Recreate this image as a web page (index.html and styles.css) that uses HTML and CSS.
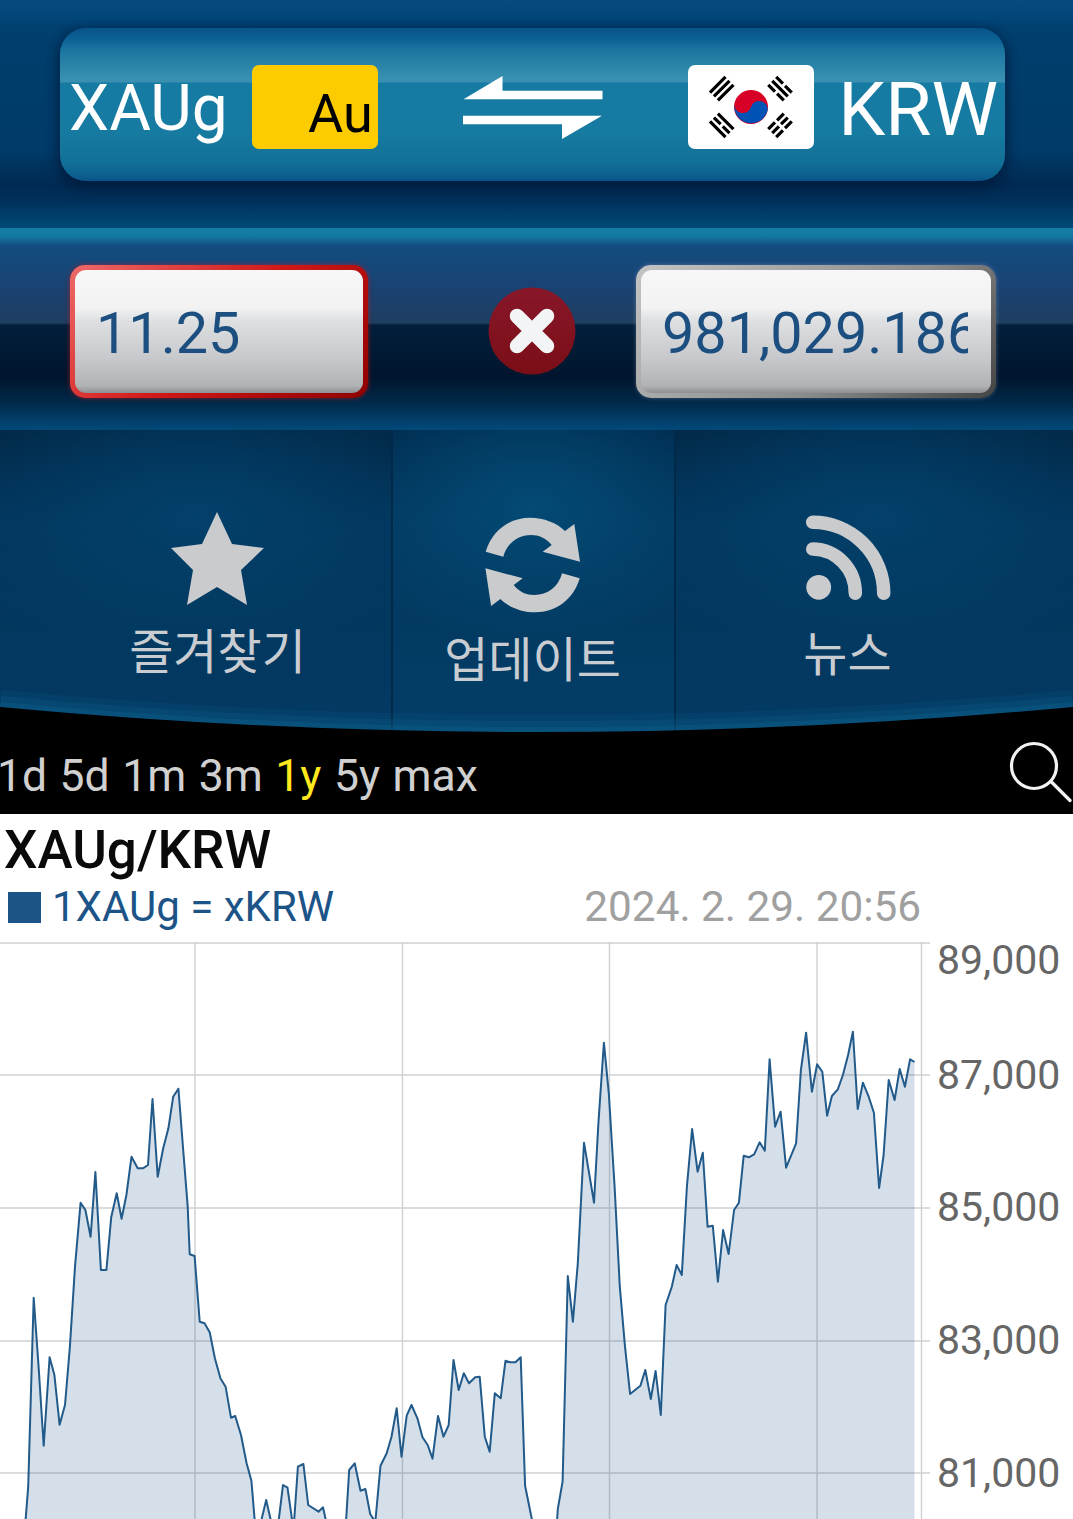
FILE: index.html
```html
<!DOCTYPE html>
<html lang="ko">
<head>
<meta charset="utf-8">
<title>XAUg/KRW</title>
<link rel="stylesheet" href="styles.css">
</head>
<body>
<div class="app">
  <header class="pair-band">
    <div class="pair-pill">
      <div class="cur">
        <span class="cur-code cur-code-from">XAUg</span>
        <span class="badge badge-au">Au</span>
      </div>
      <svg class="swap" viewBox="0 0 140 64" width="140" height="64">
        <path fill="#fff" d="M0.5 23.3 L39.5 0 L39.5 14.7 L139.5 14.7 L139.5 23.3 Z M0 39.7 L139 39.7 L99 63 L99 48.3 L0 48.3 Z"/>
      </svg>
      <div class="cur">
        <span class="badge badge-flag">
          <svg viewBox="0 0 126 84" width="126" height="84">
            <circle cx="63" cy="42" r="17" fill="#d80027"/>
            <path fill="#0052b4" d="M46.5 38 A8.5 8.5 0 0 0 63 42 A8.5 8.5 0 0 1 79.5 46 A17 17 0 0 1 46.5 38 Z"/>
            <g stroke="#000" stroke-width="3.2" fill="none">
              <g transform="translate(33.7 23.7) rotate(-45)">
                <path d="M-11 -5.6H11M-11 0H11M-11 5.6H11"/>
              </g>
              <g transform="translate(92 23.7) rotate(45)">
                <path d="M-11 -5.6H-1.5M1.5 -5.6H11M-11 0H11M-11 5.6H-1.5M1.5 5.6H11"/>
              </g>
              <g transform="translate(33.7 60.3) rotate(45)">
                <path d="M-11 -5.6H11M-11 0H-1.5M1.5 0H11M-11 5.6H11"/>
              </g>
              <g transform="translate(92 60.3) rotate(-45)">
                <path d="M-11 -5.6H-1.5M1.5 -5.6H11M-11 0H-1.5M1.5 0H11M-11 5.6H-1.5M1.5 5.6H11"/>
              </g>
            </g>
          </svg>
        </span>
        <span class="cur-code cur-code-to">KRW</span>
      </div>
    </div>
  </header>

  <section class="amount-band">
    <div class="field field-active"><div class="field-inner"><span class="field-text">11.25</span></div></div>
    <svg class="clear" viewBox="0 0 88 88" width="88" height="88">
      <defs>
        <linearGradient id="clearFill" x1="0" y1="0" x2="0" y2="1">
          <stop offset="0" stop-color="#88172a"/>
          <stop offset="1" stop-color="#7a0e16"/>
        </linearGradient>
      </defs>
      <circle cx="44" cy="44" r="43.5" fill="url(#clearFill)"/>
      <path d="M29 29 L59 59 M59 29 L29 59" stroke="#f3f4f6" stroke-width="14.5" stroke-linecap="round"/>
    </svg>
    <div class="field field-result"><div class="field-inner"><span class="field-text">981,029.186</span></div></div>
  </section>

  <nav class="tools">
    <div class="tool tool-fav">
      <svg class="tool-icon" viewBox="0 0 95 95" width="95" height="95">
        <path fill="#c9cbcd" d="M47 1 L62 33 L94 37 L71 59 L77 94 L47 76 L17 94 L23 59 L1 37 L32 33 Z"/>
      </svg>
      <span class="tool-label">즐겨찾기</span>
    </div>
    <div class="tool tool-update">
      <svg class="tool-icon" viewBox="0 0 125 120" width="125" height="120">
        <path fill="#c9cbcd" d="M15.7 46.7 C22 25 40 12.7 60 12.7 C74 12.7 87 18 95 26 L104.3 19 L110 56.7 L72.7 46.7 L81.7 40 C76 33 69 30 61 30 C48 30 37 38 33.3 51.7 Z"/>
        <path fill="#c9cbcd" transform="rotate(180 62.7 60)" d="M15.7 46.7 C22 25 40 12.7 60 12.7 C74 12.7 87 18 95 26 L104.3 19 L110 56.7 L72.7 46.7 L81.7 40 C76 33 69 30 61 30 C48 30 37 38 33.3 51.7 Z"/>
      </svg>
      <span class="tool-label">업데이트</span>
    </div>
    <div class="tool tool-news">
      <svg class="tool-icon" viewBox="0 0 115 110" width="115" height="110">
        <circle cx="28.7" cy="83.3" r="12.4" fill="#c9cbcd"/>
        <path fill="none" stroke="#c9cbcd" stroke-width="13.5" stroke-linecap="round" d="M22.7 18.3 A71 71 0 0 1 93.7 89.3 M22.7 45 A43 44 0 0 1 65.3 89.3"/>
      </svg>
      <span class="tool-label">뉴스</span>
    </div>
    <svg class="tools-curve" viewBox="0 0 1073 50" preserveAspectRatio="none">
      <g fill="none" stroke="#1478a6">
        <path stroke-width="34" stroke-opacity=".10" d="M0 22 Q536 72 1073 22"/>
        <path stroke-width="22" stroke-opacity=".14" d="M0 22 Q536 72 1073 22"/>
        <path stroke-width="10" stroke-opacity=".2" d="M0 22 Q536 72 1073 22"/>
      </g>
      <path fill="#000" d="M0 22 Q536 72 1073 22 L1073 50 L0 50 Z"/>
    </svg>
  </nav>

  <div class="range-bar">
    <div class="ranges">
      <span>1d</span><span>5d</span><span>1m</span><span>3m</span><span class="range-on">1y</span><span>5y</span><span>max</span>
    </div>
    <svg class="search" viewBox="0 0 66 66" width="66" height="66">
      <circle cx="28" cy="27" r="22.5" fill="none" stroke="#f2f2f2" stroke-width="3.2"/>
      <path d="M45 42.5 L64 61.5" stroke="#f2f2f2" stroke-width="3.2" stroke-linecap="round"/>
    </svg>
  </div>

  <main class="chart-panel">
    <h1 class="chart-title">XAUg/KRW</h1>
    <div class="chart-meta">
      <div class="legend"><i class="legend-swatch"></i><span>1XAUg = xKRW</span></div>
      <span class="stamp">2024. 2. 29. 20:56</span>
    </div>
    <div class="plot-row">
      <svg class="plot" viewBox="0 942 930 577" width="930" height="577">
        <g stroke="#dcdcdc" stroke-width="2">
          <path d="M0 943H930M0 1075H930M0 1208H930M0 1341H930M0 1473H930"/>
        </g>
        <g stroke="#d0d0d0" stroke-width="1.4">
          <path d="M195 942V1519M402.5 942V1519M609.5 942V1519M817 942V1519M921.5 942V1519"/>
        </g>
        <path fill="#1c5488" fill-opacity=".19" d="M24.8 1530 L28.2 1486.7 L33.7 1297.7 L38.6 1366.7 L43.7 1445.7 L49.6 1357.3 L54.4 1375 L59.6 1424.7 L65 1405 L69.9 1346.7 L75 1266.7 L80.6 1202.7 L85.4 1210 L90.6 1236.7 L95.4 1172 L100.9 1270 L106.4 1270 L111.2 1217.3 L116.7 1193.3 L121.6 1218.7 L126.4 1195 L131.5 1156.7 L137.7 1168.3 L142.9 1168.3 L148 1165 L152.5 1099 L157.7 1176.7 L163.2 1148.3 L168.4 1128.3 L173.2 1096.7 L178.4 1088.7 L183.2 1150 L187.7 1206.7 L189.7 1254.3 L194.6 1256 L199.7 1321.7 L204.5 1323.3 L209.7 1332.3 L214.9 1358.3 L220.4 1378.3 L225.6 1386.7 L231 1417.7 L235.2 1416 L241 1435 L246.6 1463.3 L251.4 1480.7 L255.5 1530 L259 1530 L266.2 1500 L273 1530 L277.5 1530 L283 1485 L287.5 1487.7 L293.5 1530 L297.9 1466.7 L303.4 1464 L308.2 1505 L318.5 1511.7 L323 1507.3 L328 1530 L345.5 1530 L349.2 1470 L354.7 1463.3 L360.5 1490.7 L365.4 1489 L370.2 1514 L375.3 1522 L380.5 1465.7 L386.7 1453.3 L391.5 1436.7 L396.7 1408.3 L401.5 1456.7 L406.7 1415.7 L411.5 1405 L417.4 1418.3 L422.5 1437.3 L427.7 1445 L432.5 1458.7 L438 1416 L443.5 1436.7 L448.7 1425 L453.5 1360 L458.7 1390 L463.8 1373.3 L469 1383.3 L475.2 1377.3 L479.7 1376.7 L484.8 1436.7 L489.7 1451.7 L494.8 1393.3 L500.7 1398.3 L505.5 1360.7 L510.3 1362.3 L515.5 1362.3 L520.7 1357.3 L525.1 1485.7 L533 1525 L556.5 1530 L557.8 1509 L562.6 1481.7 L567.8 1276 L572.9 1321.7 L577.8 1263.3 L584 1142.7 L594 1202.7 L598.4 1123.3 L603.9 1042.7 L608.8 1093.3 L614.6 1186.7 L619.8 1286.7 L625 1346.7 L630.1 1394 L640.4 1385.7 L645.3 1370 L650.8 1399 L655.6 1371 L660.8 1415 L665.6 1305 L671.8 1286.7 L676.6 1265 L681.8 1275 L686.9 1186.7 L692.1 1129 L697.6 1171.7 L702.8 1152.7 L707.6 1226.7 L712.8 1225.7 L717.9 1281.7 L723.1 1230 L728.6 1254 L734.1 1210 L738.9 1202.7 L743.7 1155.7 L748.9 1157.3 L754.1 1154.3 L759.6 1142.3 L764.8 1150.7 L769.6 1059.3 L775.1 1126.7 L780.6 1111.7 L786.1 1167.7 L796.1 1143.3 L800.9 1070 L806.1 1032.7 L811.9 1091.7 L817.1 1064.3 L822.3 1071.7 L827.1 1115.7 L831.9 1096 L837.8 1089.3 L842.9 1075 L848.1 1055 L852.9 1031.7 L857.7 1109 L862.9 1082.7 L868.7 1096.7 L873.9 1112.7 L879.1 1188 L883.6 1155 L888.7 1080 L894.6 1100 L899.7 1069 L904.9 1086.7 L910.1 1059.3 L914.5 1062 L914.5 1530 Z"/>
        <path fill="none" stroke="#225a8a" stroke-width="2" stroke-linejoin="round" d="M24.8 1530 L28.2 1486.7 L33.7 1297.7 L38.6 1366.7 L43.7 1445.7 L49.6 1357.3 L54.4 1375 L59.6 1424.7 L65 1405 L69.9 1346.7 L75 1266.7 L80.6 1202.7 L85.4 1210 L90.6 1236.7 L95.4 1172 L100.9 1270 L106.4 1270 L111.2 1217.3 L116.7 1193.3 L121.6 1218.7 L126.4 1195 L131.5 1156.7 L137.7 1168.3 L142.9 1168.3 L148 1165 L152.5 1099 L157.7 1176.7 L163.2 1148.3 L168.4 1128.3 L173.2 1096.7 L178.4 1088.7 L183.2 1150 L187.7 1206.7 L189.7 1254.3 L194.6 1256 L199.7 1321.7 L204.5 1323.3 L209.7 1332.3 L214.9 1358.3 L220.4 1378.3 L225.6 1386.7 L231 1417.7 L235.2 1416 L241 1435 L246.6 1463.3 L251.4 1480.7 L255.5 1530 L259 1530 L266.2 1500 L273 1530 L277.5 1530 L283 1485 L287.5 1487.7 L293.5 1530 L297.9 1466.7 L303.4 1464 L308.2 1505 L318.5 1511.7 L323 1507.3 L328 1530 L345.5 1530 L349.2 1470 L354.7 1463.3 L360.5 1490.7 L365.4 1489 L370.2 1514 L375.3 1522 L380.5 1465.7 L386.7 1453.3 L391.5 1436.7 L396.7 1408.3 L401.5 1456.7 L406.7 1415.7 L411.5 1405 L417.4 1418.3 L422.5 1437.3 L427.7 1445 L432.5 1458.7 L438 1416 L443.5 1436.7 L448.7 1425 L453.5 1360 L458.7 1390 L463.8 1373.3 L469 1383.3 L475.2 1377.3 L479.7 1376.7 L484.8 1436.7 L489.7 1451.7 L494.8 1393.3 L500.7 1398.3 L505.5 1360.7 L510.3 1362.3 L515.5 1362.3 L520.7 1357.3 L525.1 1485.7 L533 1525 L556.5 1530 L557.8 1509 L562.6 1481.7 L567.8 1276 L572.9 1321.7 L577.8 1263.3 L584 1142.7 L594 1202.7 L598.4 1123.3 L603.9 1042.7 L608.8 1093.3 L614.6 1186.7 L619.8 1286.7 L625 1346.7 L630.1 1394 L640.4 1385.7 L645.3 1370 L650.8 1399 L655.6 1371 L660.8 1415 L665.6 1305 L671.8 1286.7 L676.6 1265 L681.8 1275 L686.9 1186.7 L692.1 1129 L697.6 1171.7 L702.8 1152.7 L707.6 1226.7 L712.8 1225.7 L717.9 1281.7 L723.1 1230 L728.6 1254 L734.1 1210 L738.9 1202.7 L743.7 1155.7 L748.9 1157.3 L754.1 1154.3 L759.6 1142.3 L764.8 1150.7 L769.6 1059.3 L775.1 1126.7 L780.6 1111.7 L786.1 1167.7 L796.1 1143.3 L800.9 1070 L806.1 1032.7 L811.9 1091.7 L817.1 1064.3 L822.3 1071.7 L827.1 1115.7 L831.9 1096 L837.8 1089.3 L842.9 1075 L848.1 1055 L852.9 1031.7 L857.7 1109 L862.9 1082.7 L868.7 1096.7 L873.9 1112.7 L879.1 1188 L883.6 1155 L888.7 1080 L894.6 1100 L899.7 1069 L904.9 1086.7 L910.1 1059.3 L914.5 1062"/>
      </svg>
      <div class="axis">
        <span class="tick tick-top">89,000</span>
        <span class="tick">87,000</span>
        <span class="tick">85,000</span>
        <span class="tick">83,000</span>
        <span class="tick">81,000</span>
      </div>
    </div>
  </main>
</div>
</body>
</html>
```
FILE: styles.css
```css
* { box-sizing: border-box; }
html, body { margin: 0; padding: 0; background: #fff; }
body { width: 1073px; height: 1519px; overflow: hidden; font-family: Roboto, "Noto Sans CJK KR", sans-serif; }
.app { display: flex; flex-direction: column; width: 1073px; height: 1519px; overflow: hidden; }

/* pair selector */
.pair-band {
  height: 228px;
  padding: 28px 68px 47px 60px;
  background: linear-gradient(180deg, #074b7e 0, #03487a 14px, #003f6e 28px, #003b69 150px, #002a52 185px, #00305a 200px, #004a78 228px);
}
.pair-pill {
  display: flex;
  align-items: center;
  justify-content: space-between;
  height: 153px;
  padding: 4px 7px 0 9px;
  border-radius: 26px;
  background: linear-gradient(180deg, #07548a 0, #0b5f92 10px, #1a75a0 22px, #3790b0 50px, #3a90b1 54px, #167ba3 55px, #167aa1 105px, #127096 135px, #0b5c8c 150px, #09508a 153px);
  box-shadow: 0 8px 14px rgba(0, 22, 52, .45), 4px 2px 10px rgba(0, 30, 60, .3), -4px 2px 10px rgba(0, 30, 60, .3);
}
.cur { display: flex; align-items: center; gap: 24px; }
.cur-code { color: #fff; }
.cur-code-from { font-size: 64px; line-height: 84px; position: relative; top: 2px; }
.cur-code-to { font-size: 75px; line-height: 84px; position: relative; top: 2px; }
.badge { display: block; width: 126px; height: 84px; border-radius: 7px; overflow: hidden; }
.badge svg { display: block; }
.badge-au { padding-right: 5px; background: #fccc00; color: #000; font-size: 54px; line-height: 98px; text-align: right; }
.badge-flag { background: #fff; }
.swap { display: block; margin: 2px 0 0 0; flex: none; }

/* amounts */
.amount-band {
  display: flex;
  align-items: flex-start;
  height: 202px;
  padding: 37px 0 0 70px;
  background: linear-gradient(180deg, #157da5 0, #157aa2 8px, #134c80 18px, #1a4272 60px, #1f3e60 95px, #021f3c 97px, #01152d 150px, #012a4a 175px, #024a7a 202px);
}
.field {
  flex: none;
  width: 298px;
  height: 133px;
  padding: 5px;
  border-radius: 15px;
  background: linear-gradient(135deg, #c4c4c4 0, #8c8c8c 60%, #444 100%);
  box-shadow: 0 0 4px rgba(255, 255, 255, .25);
}
.field-result { width: 360px; }
.field-active {
  background: linear-gradient(135deg, #f06a6a 0, #d01818 50%, #8e0000 100%);
  box-shadow: 0 0 5px rgba(220, 20, 20, .6);
}
.field-inner {
  height: 100%;
  padding: 0 23px 0 21px;
  border-radius: 11px;
  background: linear-gradient(180deg, #f7f7f7 0, #f2f2f2 38px, #dfe0e2 50px, #c6c7ca 90px, #b0b2b4 116px, #8f8f92 123px);
  color: #1c4f80;
  font-size: 57.5px;
  line-height: 128px;
}
.field-text { display: block; overflow: hidden; white-space: nowrap; }
.clear { display: block; flex: none; margin: 22px 60px 0 120px; }

/* tool buttons */
.tools { position: relative; display: flex; height: 305px; background: #000; }
.tool {
  display: flex;
  flex-direction: column;
  align-items: center;
  background: radial-gradient(ellipse 70% 50% at 50% 28%, #03406a 0, rgba(3, 64, 106, 0) 100%), linear-gradient(180deg, #012644 0, #03355c 90px, #03385f 200px, #033a63 305px);
}
.tool-fav { width: 393px; padding-top: 78px; border-right: 2px solid #01294a; }
.tool-update {
  width: 283px;
  padding-top: 75px;
  border-right: 2px solid #012a4a;
  background: radial-gradient(ellipse 75% 45% at 50% 25%, #034a74 0, rgba(3, 74, 116, 0) 100%), linear-gradient(180deg, #012b4e 0, #033860 90px, #033a62 200px, #033e68 305px);
}
.tool-news { flex: 1; padding-top: 79px; }
.tool-icon { display: block; flex: none; }
.tool-fav .tool-icon { margin: 3px 0 0 43px; }
.tool-update .tool-icon { margin-left: -3px; }
.tool-news .tool-icon { margin: -5px 0 0 -54px; }
.tool-label { color: #c9ccd0; font-size: 48px; line-height: 60px; white-space: nowrap; }
.tool-fav .tool-label { margin: 17px 0 0 44px; }
.tool-update .tool-label { margin: 6px 0 0 -2px; }
.tool-news .tool-label { margin: 11px 0 0 -54px; }
.tools-curve { position: absolute; left: 0; bottom: 0; width: 1073px; height: 50px; display: block; }

/* range bar */
.range-bar {
  display: flex;
  align-items: center;
  justify-content: space-between;
  height: 79px;
  background: #000;
}
.ranges { display: flex; gap: 12.5px; margin: 4px 0 0 -3px; font-size: 44.5px; line-height: 79px; color: #d0d0d0; }
.range-on { color: #ffe81e; }
.search { display: block; margin: -5px 1px 0 0; flex: none; }

/* chart */
.chart-panel { flex: 1; display: flex; flex-direction: column; background: #fff; }
.chart-title { margin: 0; padding-left: 4px; color: #0a0a0a; font-size: 53px; font-weight: 500; line-height: 72px; }
.chart-meta { display: flex; align-items: center; justify-content: space-between; width: 921px; height: 56px; padding-bottom: 14px; }
.legend { display: flex; align-items: center; gap: 11px; padding-left: 8px; color: #1c5488; font-size: 42px; line-height: 42px; }
.legend-swatch { display: block; width: 33px; height: 31px; background: #1c5488; }
.stamp { color: #a0a0a0; font-size: 42.3px; line-height: 44px; }
.plot-row { display: flex; height: 577px; }
.plot { display: block; flex: none; }
.axis { display: flex; flex-direction: column; padding-left: 7px; color: #666; font-size: 41px; }
.tick { display: block; flex: none; height: 132.7px; line-height: 132.7px; white-space: nowrap; }
.tick-top { height: 66.5px; line-height: 36px; }
```
